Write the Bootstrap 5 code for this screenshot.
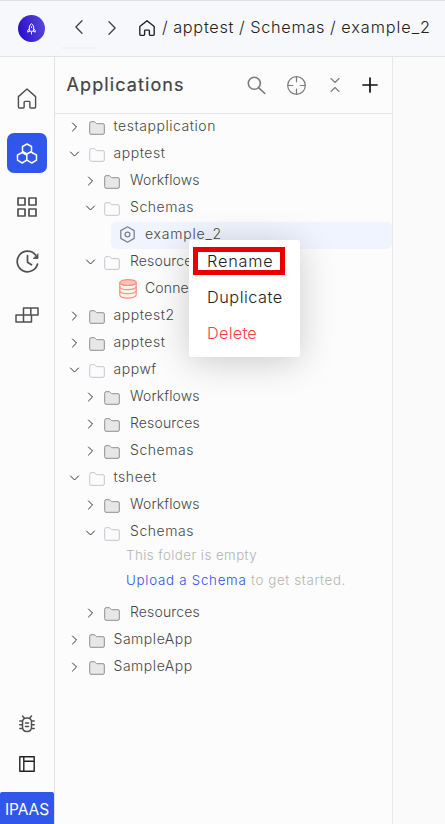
<!DOCTYPE html>
<html lang="en">
<head>
<meta charset="utf-8">
<meta name="viewport" content="width=device-width, initial-scale=1">
<title>Applications</title>
<link href="https://cdn.jsdelivr.net/npm/bootstrap@5.3.0/dist/css/bootstrap.min.css" rel="stylesheet">
<style>
body{font-family:Inter,"Open Sans",sans-serif;font-weight:300;background:#fcfcfc;color:#444;height:824px;overflow:hidden}
svg{display:block;flex:none;fill:none;stroke:currentColor;stroke-linecap:round;stroke-linejoin:round}
.topbar{height:57px;background:#f6f8fb;border-top:1px solid #dfdfdc;border-bottom:1px solid #e3e4e7;padding-left:18px;color:#222}
.logo{width:27px;height:27px;background:linear-gradient(75deg,#2d12cf 15%,#5a4ed6);color:#fff}
.history{width:34px;height:40px;margin-left:17px;border-bottom:2px solid #f1f2f4;color:#444}
.history svg,.history-next,.crumb-home{margin-bottom:2px}
.history-next{color:#444;margin:0 19px 2px 8px}
.crumbs{font-size:16.3px;letter-spacing:.72px;white-space:pre;padding-left:7px;padding-bottom:3px;word-spacing:-.5px}
.crumbs span{display:block}
.crumbs .last{letter-spacing:.95px}
.rail{width:55px;border-right:1px solid #e1e1e1;color:#505050;padding-top:22px}
.rail-item{width:40px;height:40px;margin-bottom:14px;border-radius:7px}
.rail-item:first-child{padding-bottom:2px}
.rail-item.current{background:#3156eb;color:#fff}
.frame-icon{margin:23px 0 20px;color:#222}
.ipaas{width:54px;height:32px;background:#3156eb;color:#fff;font-size:15.5px;font-weight:400;letter-spacing:-.1px;border-radius:2px 2px 0 0;padding-top:3px}
.side{width:338px;border-right:1px solid #e6e7ec}
.side-head{height:57px;border-bottom:1px solid #e5e5e5;padding-left:11.5px}
.side-head h1{font-size:18px;font-weight:400;letter-spacing:1.1px;color:#444;-webkit-text-stroke:.2px #444}
.tools{padding-right:14px;color:#7c7c80}
.tools svg+svg{margin-left:21px}
.tools svg:nth-child(3){margin-left:24px}
.tools svg:nth-child(4){margin-left:22px;color:#111}
.blank{background:#fafafa}
.tree{font-size:14px;letter-spacing:.54px;color:#484848}
.item{height:27px;padding-left:14px}
.item.sub{padding-left:30px}
.item .dir{margin-left:9px;color:#8f8f8f;fill:#e7e7e7}
.item .dir.open{color:#c5c5cf;fill:none}
.item.sub .dir{margin-left:8px}
.label{padding-bottom:3.5px}
.item .label{margin-left:8.5px}
.item.sub .label{margin-left:10px}
.item .arrow{color:#333;margin-bottom:1px}
.leaf{height:27px;margin-left:56px;padding-left:8px;border-radius:5px}
.leaf .label{margin-left:9px}
.leaf.chosen{background:#f0f4fe}
.hexnut{color:#7d8191;margin-bottom:2px}
.db{color:#f98f7f;fill:#fff1ee;margin-bottom:1px}
.db ellipse{fill:#fcc3b9}
.snug{letter-spacing:.14px}
.airy{letter-spacing:.78px}
.low{position:relative;top:1px}
.empty{font-size:13.3px;letter-spacing:.45px;color:#b4b4b4;padding:0 0 4px 71px}
.empty div{height:25px;line-height:18px}
.empty div+div{letter-spacing:.64px}
.empty a{color:#2e4fee;letter-spacing:.75px;text-decoration:none}
.menu{position:absolute;left:189px;top:240px;width:111px;height:117px;background:#fff;border-radius:2px;box-shadow:0 5px 36px rgba(0,0,0,.2);padding:3px 0 0 18px;color:#222;font-size:16.3px;letter-spacing:.52px}
.menu div{height:36px;line-height:36px}
.menu .first{letter-spacing:.8px}
.menu .danger{color:#ff4046;letter-spacing:.25px}
.marker{position:absolute;left:4px;top:7px;width:92px;height:28px;border:5px solid #ea0000}
</style>
<script src="https://cdn.jsdelivr.net/npm/bootstrap@5.3.0/dist/js/bootstrap.bundle.min.js"></script>
</head>
<body class="d-flex flex-column position-relative">
<svg width="0" height="0" class="position-absolute" aria-hidden="true">
  <symbol id="home" viewBox="0 0 20 22"><path d="M1 9 10 1l9 8v11q0 1-1 1h-4q-1 0-1-1v-5q0-1-1-1H8q-1 0-1 1v5q0 1-1 1H2q-1 0-1-1z"/></symbol>
  <symbol id="dir" viewBox="0 0 16 14"><path d="M.7 2q0-1.300 1.300-1.300h3.100q.6 0 1 .5l1 1.100q.4.4 1 .4H14q1.300 0 1.300 1.300V12q0 1.300-1.300 1.300H2Q.7 13.300.7 12z"/></symbol>
  <symbol id="right" viewBox="0 0 8 10"><path d="M2 1l4 4-4 4"/></symbol>
  <symbol id="down" viewBox="0 0 10 8"><path d="M1 2l4 4 4-4"/></symbol>
</svg>

<header class="topbar d-flex align-items-center flex-shrink-0">
  <div class="logo rounded-circle d-flex align-items-center justify-content-center">
    <svg width="9" height="12" viewBox="0 0 9 12"><path d="M2.300 7.800V4Q2.500 2 4.500.8 6.500 2 6.700 4v3.800zM2.300 5.800.8 7.500v1.700l1.500-1M6.700 5.800l1.500 1.700v1.700l-1.500-1M4.500 9.300v1.700M4.500 3.800v.8"/></svg>
  </div>
  <div class="history d-flex align-items-center justify-content-center"><svg width="8" height="14" viewBox="0 0 8 14" stroke-width="1.300"><path d="M7 .7.9 7 7 13.300"/></svg></div>
  <svg class="history-next" width="16" height="14" viewBox="-4 0 16 14" stroke-width="1.300"><path d="M1 .7 7.100 7 1 13.300"/></svg>
  <svg class="crumb-home" width="16" height="16" viewBox="0 0 20 22" preserveAspectRatio="none" stroke-width="1.700"><use href="#home"/></svg>
  <nav class="crumbs d-flex" aria-label="breadcrumb"><span>/ </span><span>apptest </span><span>/ </span><span>Schemas </span><span>/ </span><span class="last">example_2</span></nav>
</header>

<div class="d-flex flex-grow-1">
  <aside class="rail d-flex flex-column align-items-center flex-shrink-0">
    <div class="rail-item d-flex align-items-center justify-content-center"><svg width="20" height="21" stroke-width="1.500"><use href="#home"/></svg></div>
    <div class="rail-item current d-flex align-items-center justify-content-center"><svg width="22" height="21" viewBox="0 0 22 21" stroke-width="1.500"><path d="M11 1l4.500 2.500v5L11 11 6.500 8.500v-5zM6.200 9.500l4.600 2.500v5.200L6.200 20 1.500 17.200V12zM15.800 9.500l4.700 2.500v5.200L15.800 20l-5-2.800"/></svg></div>
    <div class="rail-item d-flex align-items-center justify-content-center"><svg width="20" height="20" viewBox="0 0 20 20" stroke-width="1.700" stroke-linejoin="miter"><path d="M1 1h7v7H1zM12 1h7v7h-7zM1 12h7v7H1zM12 12h7v7h-7z"/></svg></div>
    <div class="rail-item d-flex align-items-center justify-content-center"><svg width="23" height="23" viewBox="0 0 23 23" stroke-width="1.700"><path d="M21.500 14A10.300 10.300 0 1 1 19.500 5M11.500 5.500v6.800l4 2.500"/><path d="M22 4v4.500h-4.500z" fill="currentColor" stroke-width=".8"/></svg></div>
    <div class="rail-item d-flex align-items-center justify-content-center"><svg width="24" height="16" viewBox="0 0 24 16" stroke-width="1.500" stroke-linejoin="miter"><path d="M8.500.9H23v7H8.500zM1 7.900h15.500V15H1zM15.800.9v7M8.500 7.900V15"/></svg></div>
    <svg class="mt-auto" width="16" height="18" viewBox="0 0 16 18" stroke-width="1.500"><path d="M3.500 7Q3.500 3 8 3t4.500 4v5Q12.500 16.500 8 16.500T3.500 12zM3.500 1l2 2.300M12.500 1l-2 2.300M.8 6h2.700M.8 9.800h2.700M.8 13.600h3M12.500 6h2.700M12.500 9.800h2.700M12.200 13.600h3M6.500 8h3M6.500 11.600h3"/></svg>
    <svg class="frame-icon" width="16" height="16" viewBox="0 0 16 16" stroke-width="1.400" stroke-linejoin="miter"><path d="M.8.8h14.400v14.400H.8zM4.800 1v14M4.800 5.200H15"/></svg>
    <div class="ipaas align-self-start d-flex align-items-center justify-content-center flex-shrink-0">IPAAS</div>
  </aside>

  <section class="side flex-shrink-0">
    <div class="side-head d-flex align-items-center">
      <h1 class="mb-0">Applications</h1>
      <div class="tools d-flex align-items-center ms-auto">
        <svg width="19" height="19" viewBox="0 0 19 19" stroke-width="1.600"><circle cx="7.300" cy="7.300" r="6"/><path d="M11.800 11.800l6 5.700"/></svg>
        <svg width="19" height="19" viewBox="0 0 19 19" stroke-width="1.200"><circle cx="9.500" cy="9.500" r="8.800"/><path d="M9.500 1v4.800M9.500 13.200V18M1 9.500h4.800M13.200 9.500H18"/></svg>
        <svg width="10" height="16" viewBox="0 0 10 16" stroke-width="1.100"><path d="M1 1.500l4 4 4-4M1 14.500l4-4 4 4"/></svg>
        <svg width="16" height="16" viewBox="0 0 16 16" stroke-width="1.700"><path d="M8 1v14M1 8h14"/></svg>
      </div>
    </div>
    <div class="tree">
      <div class="item d-flex align-items-center"><svg class="arrow" width="11" height="10"><use href="#right"/></svg><svg class="dir" width="16" height="14"><use href="#dir"/></svg><span class="label">testapplication</span></div>
      <div class="item d-flex align-items-center"><svg class="arrow" width="11" height="8"><use href="#down"/></svg><svg class="dir open" width="16" height="14"><use href="#dir"/></svg><span class="label">apptest</span></div>
      <div class="item sub d-flex align-items-center"><svg class="arrow" width="11" height="10"><use href="#right"/></svg><svg class="dir" width="16" height="14"><use href="#dir"/></svg><span class="label snug">Workflows</span></div>
      <div class="item sub d-flex align-items-center"><svg class="arrow" width="11" height="8"><use href="#down"/></svg><svg class="dir open" width="16" height="14"><use href="#dir"/></svg><span class="label">Schemas</span></div>
      <div class="leaf chosen d-flex align-items-center"><svg class="hexnut" width="17" height="17" viewBox="0 0 17 17" stroke-width="1.300"><path d="M8.500.8l6.700 3.800v7.800l-6.700 3.800-6.700-3.800V4.600z"/><circle cx="8.500" cy="8.500" r="2.400"/></svg><span class="label airy">example_2</span></div>
      <div class="item sub d-flex align-items-center"><svg class="arrow" width="11" height="8"><use href="#down"/></svg><svg class="dir open" width="16" height="14"><use href="#dir"/></svg><span class="label snug">Resources</span></div>
      <div class="leaf d-flex align-items-center"><svg class="db" width="18" height="20" viewBox="0 0 18 20" stroke-width="1.200"><path d="M.8 3.500v12.300c0 4.400 16.400 4.400 16.400 0V3.500"/><path d="M.8 7.500c0 4.200 16.400 4.200 16.400 0M.8 11.600c0 4.200 16.400 4.200 16.400 0"/><ellipse cx="9" cy="3.600" rx="8.200" ry="2.900"/></svg><span class="label snug ms-2">Conne</span></div>
      <div class="item d-flex align-items-center"><svg class="arrow" width="11" height="10"><use href="#right"/></svg><svg class="dir" width="16" height="14"><use href="#dir"/></svg><span class="label">apptest2</span></div>
      <div class="item d-flex align-items-center"><svg class="arrow" width="11" height="10"><use href="#right"/></svg><svg class="dir" width="16" height="14"><use href="#dir"/></svg><span class="label">apptest</span></div>
      <div class="item d-flex align-items-center"><svg class="arrow" width="11" height="8"><use href="#down"/></svg><svg class="dir open" width="16" height="14"><use href="#dir"/></svg><span class="label">appwf</span></div>
      <div class="item sub d-flex align-items-center"><svg class="arrow" width="11" height="10"><use href="#right"/></svg><svg class="dir" width="16" height="14"><use href="#dir"/></svg><span class="label snug">Workflows</span></div>
      <div class="item sub d-flex align-items-center"><svg class="arrow" width="11" height="10"><use href="#right"/></svg><svg class="dir" width="16" height="14"><use href="#dir"/></svg><span class="label snug">Resources</span></div>
      <div class="item sub d-flex align-items-center"><svg class="arrow" width="11" height="10"><use href="#right"/></svg><svg class="dir" width="16" height="14"><use href="#dir"/></svg><span class="label">Schemas</span></div>
      <div class="item d-flex align-items-center"><svg class="arrow" width="11" height="8"><use href="#down"/></svg><svg class="dir open" width="16" height="14"><use href="#dir"/></svg><span class="label">tsheet</span></div>
      <div class="item sub d-flex align-items-center"><svg class="arrow" width="11" height="10"><use href="#right"/></svg><svg class="dir" width="16" height="14"><use href="#dir"/></svg><span class="label snug">Workflows</span></div>
      <div class="item sub d-flex align-items-center"><svg class="arrow low" width="11" height="8"><use href="#down"/></svg><svg class="dir open low" width="16" height="14"><use href="#dir"/></svg><span class="label">Schemas</span></div>
      <div class="empty"><div>This folder is empty</div><div><a href="#">Upload a Schema</a> to get started.</div></div>
      <div class="item sub d-flex align-items-center"><svg class="arrow" width="11" height="10"><use href="#right"/></svg><svg class="dir" width="16" height="14"><use href="#dir"/></svg><span class="label snug">Resources</span></div>
      <div class="item d-flex align-items-center"><svg class="arrow" width="11" height="10"><use href="#right"/></svg><svg class="dir" width="16" height="14"><use href="#dir"/></svg><span class="label">SampleApp</span></div>
      <div class="item d-flex align-items-center"><svg class="arrow" width="11" height="10"><use href="#right"/></svg><svg class="dir" width="16" height="14"><use href="#dir"/></svg><span class="label">SampleApp</span></div>
    </div>
  </section>
  <main class="blank flex-grow-1"></main>
</div>

<div class="menu">
  <div class="first">Rename</div><div>Duplicate</div><div class="danger">Delete</div>
  <span class="marker"></span>
</div>
</body>
</html>
